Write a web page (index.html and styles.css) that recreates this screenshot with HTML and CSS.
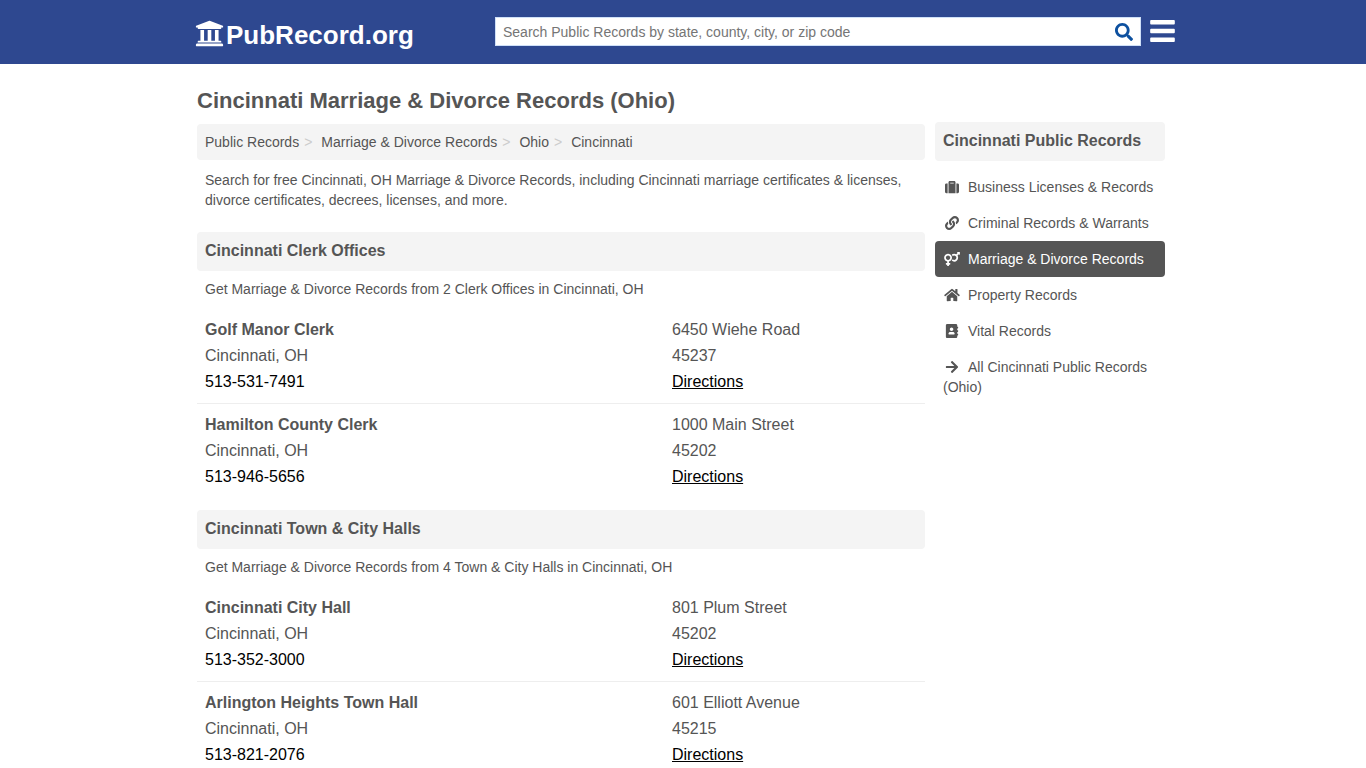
FILE: index.html
```html
<!DOCTYPE html>
<html lang="en">
<head>
  <meta charset="UTF-8">
  <title>Cincinnati Marriage &amp; Divorce Records (Ohio)</title>
  <meta name="viewport" content="width=device-width, initial-scale=1">
  <link rel="stylesheet" href="styles.css">
</head>
<body>
  <header class="header">
    <div class="header-inner">
      <a class="logo" href="#">
        <svg class="logo-icon" viewBox="0 0 512 512" aria-hidden="true"><path d="M496 128v16a8 8 0 0 1-8 8h-24v12c0 6.627-5.373 12-12 12H60c-6.627 0-12-5.373-12-12v-12H24a8 8 0 0 1-8-8v-16a8 8 0 0 1 4.941-7.392l232-88a7.996 7.996 0 0 1 6.118 0l232 88A8 8 0 0 1 496 128zm-24 304H40c-13.255 0-24 10.745-24 24v16a8 8 0 0 0 8 8h464a8 8 0 0 0 8-8v-16c0-13.255-10.745-24-24-24zM96 192v192H60c-6.627 0-12 5.373-12 12v20h416v-20c0-6.627-5.373-12-12-12h-36V192h-64v192h-64V192h-64v192h-64V192H96z"/></svg>
        <span>PubRecord.org</span>
      </a>
      <form class="search" role="search">
        <input type="text" name="q" aria-label="Search Public Records" placeholder="Search Public Records by state, county, city, or zip code">
        <button type="submit" aria-label="Search">
          <svg viewBox="0 0 512 512" aria-hidden="true"><path d="M505 442.7L405.3 343c-4.5-4.5-10.6-7-17-7H372c27.6-35.3 44-79.7 44-128C416 93.1 322.9 0 208 0S0 93.1 0 208s93.1 208 208 208c48.3 0 92.7-16.4 128-44v16.3c0 6.4 2.5 12.5 7 17l99.7 99.7c9.4 9.4 24.6 9.4 33.9 0l28.3-28.3c9.4-9.4 9.4-24.6.1-34zM208 336c-70.7 0-128-57.2-128-128 0-70.7 57.2-128 128-128 70.7 0 128 57.2 128 128 0 70.7-57.2 128-128 128z"/></svg>
        </button>
      </form>
      <button class="menu" type="button" aria-label="Menu">
        <svg viewBox="0 0 448 400" aria-hidden="true"><path d="M16 0h416a16 16 0 0 1 16 16v48a16 16 0 0 1-16 16H16A16 16 0 0 1 0 64V16A16 16 0 0 1 16 0zm0 160h416a16 16 0 0 1 16 16v48a16 16 0 0 1-16 16H16a16 16 0 0 1-16-16v-48a16 16 0 0 1 16-16zm0 160h416a16 16 0 0 1 16 16v48a16 16 0 0 1-16 16H16a16 16 0 0 1-16-16v-48a16 16 0 0 1 16-16z"/></svg>
      </button>
    </div>
  </header>

  <div class="container">
    <main class="content">
      <h1>Cincinnati Marriage &amp; Divorce Records (Ohio)</h1>
      <nav aria-label="Breadcrumb">
        <ol class="breadcrumb">
          <li><a href="#">Public Records</a></li>
          <li><a href="#">Marriage &amp; Divorce Records</a></li>
          <li><a href="#">Ohio</a></li>
          <li><a href="#">Cincinnati</a></li>
        </ol>
      </nav>
      <p class="intro">Search for free Cincinnati, OH Marriage &amp; Divorce Records, including Cincinnati marriage certificates &amp; licenses, divorce certificates, decrees, licenses, and more.</p>

      <section>
        <h2>Cincinnati Clerk Offices</h2>
        <p>Get Marriage &amp; Divorce Records from 2 Clerk Offices in Cincinnati, OH</p>
        <div class="office">
          <div>
            <h3>Golf Manor Clerk</h3>
            <div>Cincinnati, OH</div>
            <a class="phone" href="tel:513-531-7491">513-531-7491</a>
          </div>
          <div>
            <div>6450 Wiehe Road</div>
            <div>45237</div>
            <a href="#">Directions</a>
          </div>
        </div>
        <div class="office">
          <div>
            <h3>Hamilton County Clerk</h3>
            <div>Cincinnati, OH</div>
            <a class="phone" href="tel:513-946-5656">513-946-5656</a>
          </div>
          <div>
            <div>1000 Main Street</div>
            <div>45202</div>
            <a href="#">Directions</a>
          </div>
        </div>
      </section>

      <section>
        <h2>Cincinnati Town &amp; City Halls</h2>
        <p>Get Marriage &amp; Divorce Records from 4 Town &amp; City Halls in Cincinnati, OH</p>
        <div class="office">
          <div>
            <h3>Cincinnati City Hall</h3>
            <div>Cincinnati, OH</div>
            <a class="phone" href="tel:513-352-3000">513-352-3000</a>
          </div>
          <div>
            <div>801 Plum Street</div>
            <div>45202</div>
            <a href="#">Directions</a>
          </div>
        </div>
        <div class="office">
          <div>
            <h3>Arlington Heights Town Hall</h3>
            <div>Cincinnati, OH</div>
            <a class="phone" href="tel:513-821-2076">513-821-2076</a>
          </div>
          <div>
            <div>601 Elliott Avenue</div>
            <div>45215</div>
            <a href="#">Directions</a>
          </div>
        </div>
      </section>
    </main>

    <aside class="sidebar">
      <h2>Cincinnati Public Records</h2>
      <ul>
        <li><a href="#"><svg viewBox="0 0 512 512" aria-hidden="true"><path d="M128 480h256V80c0-26.5-21.5-48-48-48H176c-26.5 0-48 21.5-48 48v400zm64-384h128v32H192V96zm320 80v256c0 26.5-21.5 48-48 48h-48V128h48c26.5 0 48 21.5 48 48zM96 480H48c-26.5 0-48-21.5-48-48V176c0-26.5 21.5-48 48-48h48v352z"/></svg>Business Licenses &amp; Records</a></li>
        <li><a href="#"><svg viewBox="0 0 512 512" aria-hidden="true"><path d="M326.612 185.391c59.747 59.809 58.927 155.698.36 214.59-.11.12-.24.25-.36.37l-67.2 67.2c-59.27 59.27-155.699 59.262-214.96 0-59.27-59.26-59.27-155.7 0-214.96l37.106-37.106c9.84-9.84 26.786-3.3 27.294 10.606.648 17.722 3.826 35.527 9.69 52.721 1.986 5.822.567 12.262-3.783 16.612l-13.087 13.087c-28.026 28.026-28.905 73.66-1.155 101.96 28.024 28.579 74.086 28.749 102.325.51l67.2-67.19c28.191-28.191 28.073-73.757 0-101.83-3.701-3.694-7.429-6.564-10.341-8.569a16.037 16.037 0 0 1-6.947-12.606c-.396-10.567 3.348-21.456 11.698-29.806l21.054-21.055c5.521-5.521 14.182-6.199 20.584-1.731a152.482 152.482 0 0 1 20.522 17.197zM467.547 44.449c-59.261-59.262-155.69-59.27-214.96 0l-67.2 67.2c-.12.12-.25.25-.36.37-58.566 58.892-59.387 154.781.36 214.59a152.454 152.454 0 0 0 20.521 17.196c6.402 4.468 15.064 3.789 20.584-1.731l21.054-21.055c8.35-8.35 12.094-19.239 11.698-29.806a16.037 16.037 0 0 0-6.947-12.606c-2.912-2.005-6.64-4.875-10.341-8.569-28.073-28.073-28.191-73.639 0-101.83l67.2-67.19c28.239-28.239 74.3-28.069 102.325.51 27.75 28.3 26.872 73.934-1.155 101.96l-13.087 13.087c-4.35 4.35-5.769 10.79-3.783 16.612 5.864 17.194 9.042 34.999 9.69 52.721.509 13.906 17.454 20.446 27.294 10.606l37.106-37.106c59.271-59.259 59.271-155.699.001-214.959z"/></svg>Criminal Records &amp; Warrants</a></li>
        <li><a class="active" href="#"><svg viewBox="0 0 576 512" aria-hidden="true"><path d="M564 0h-79c-10.7 0-16 12.9-8.5 20.5l16.9 16.9-48.7 48.7C422.5 72.1 396.2 64 368 64c-33.7 0-64.6 11.6-89.2 30.9 14 16.7 25 36 32.1 57.1 14.5-14.8 34.7-24 57.1-24 44.1 0 80 35.9 80 80s-35.9 80-80 80c-22.3 0-42.6-9.2-57.1-24-7.1 21.1-18 40.4-32.1 57.1 24.5 19.4 55.5 30.9 89.2 30.9 79.5 0 144-64.5 144-144 0-28.2-8.1-54.5-22.1-76.7l48.7-48.7 16.9 16.9c2.4 2.4 5.4 3.5 8.4 3.5 6.2 0 12.1-4.8 12.1-12V12c0-6.6-5.4-12-12-12zM144 64C64.5 64 0 128.5 0 208c0 68.5 47.9 125.9 112 140.4V400H76c-6.6 0-12 5.4-12 12v40c0 6.6 5.4 12 12 12h36v36c0 6.6 5.4 12 12 12h40c6.6 0 12-5.4 12-12v-36h36c6.6 0 12-5.4 12-12v-40c0-6.6-5.4-12-12-12h-36v-51.6c64.1-14.6 112-71.9 112-140.4 0-79.5-64.5-144-144-144zm0 224c-44.1 0-80-35.9-80-80s35.9-80 80-80 80 35.9 80 80-35.9 80-80 80z"/></svg>Marriage &amp; Divorce Records</a></li>
        <li><a href="#"><svg viewBox="0 0 576 512" aria-hidden="true"><path d="M280.37 148.26L96 300.11V464a16 16 0 0 0 16 16l112.06-.29a16 16 0 0 0 15.92-16V368a16 16 0 0 1 16-16h64a16 16 0 0 1 16 16v95.64a16 16 0 0 0 16 16.05L464 480a16 16 0 0 0 16-16V300L295.67 148.26a12.19 12.19 0 0 0-15.3 0zM571.6 251.47L488 182.56V44.05a12 12 0 0 0-12-12h-56a12 12 0 0 0-12 12v72.61L318.47 43a48 48 0 0 0-61 0L4.34 251.47a12 12 0 0 0-1.6 16.9l25.5 31A12 12 0 0 0 45.15 301l235.22-193.74a12.19 12.19 0 0 1 15.3 0L530.9 301a12 12 0 0 0 16.9-1.6l25.5-31a12 12 0 0 0-1.7-16.93z"/></svg>Property Records</a></li>
        <li><a href="#"><svg viewBox="0 0 448 512" aria-hidden="true"><path d="M436 160c6.6 0 12-5.4 12-12v-40c0-6.6-5.4-12-12-12h-20V48c0-26.5-21.5-48-48-48H48C21.5 0 0 21.5 0 48v416c0 26.5 21.5 48 48 48h320c26.5 0 48-21.5 48-48v-48h20c6.6 0 12-5.4 12-12v-40c0-6.6-5.4-12-12-12h-20v-64h20c6.6 0 12-5.4 12-12v-40c0-6.6-5.4-12-12-12h-20v-64h20zm-228-32c35.3 0 64 28.7 64 64s-28.7 64-64 64-64-28.7-64-64 28.7-64 64-64zm112 236.8c0 10.6-10 19.2-22.4 19.2H118.4C106 384 96 375.4 96 364.8v-19.2c0-31.8 30.1-57.6 67.2-57.6h5c12.3 5.1 25.7 8 39.8 8s27.6-2.9 39.8-8h5c37.1 0 67.2 25.8 67.2 57.6v19.2z"/></svg>Vital Records</a></li>
        <li><a href="#"><svg viewBox="0 0 448 512" aria-hidden="true"><path d="M190.5 66.9l22.2-22.2c9.4-9.4 24.6-9.4 33.9 0L441 239c9.4 9.4 9.4 24.6 0 33.9L246.6 467.3c-9.4 9.4-24.6 9.4-33.9 0l-22.2-22.2c-9.5-9.5-9.3-25 .4-34.3L311.4 296H24c-13.3 0-24-10.7-24-24v-32c0-13.3 10.7-24 24-24h287.4L190.9 101.2c-9.8-9.3-10-24.8-.4-34.3z"/></svg>All Cincinnati Public Records (Ohio)</a></li>
      </ul>
    </aside>
  </div>
</body>
</html>
```

FILE: styles.css
```css
* {
  box-sizing: border-box;
}
body {
  margin: 0;
  background: #fff;
  color: #555;
  font-family: Arial, "Liberation Sans", sans-serif;
  font-size: 14px;
  line-height: 20px;
}
h1, h2, h3, p, ul, ol {
  margin: 0;
  padding: 0;
}
ul, ol {
  list-style: none;
}
a {
  color: #555;
  text-decoration: none;
}
svg {
  fill: currentColor;
}
button {
  border: none;
  background: none;
  padding: 0;
  cursor: pointer;
}

/* header */
.header {
  background: #2e4890;
}
.header-inner {
  display: flex;
  align-items: center;
  max-width: 984px;
  height: 64px;
  margin: 0 auto;
  padding-left: 4px;
}
.logo {
  display: flex;
  align-items: center;
  flex: 0 0 300px;
  gap: 2px;
  padding-top: 6px;
  color: #fff;
  font-size: 26px;
  font-weight: bold;
  line-height: 32px;
}
.logo-icon {
  width: 29px;
  height: 29px;
  margin-bottom: 4px;
}
.search {
  display: flex;
  flex: 1;
  height: 29px;
  margin-bottom: 2px;
  background: #fff;
  border: 1px solid #cfe0f8;
}
.search input {
  flex: 1;
  min-width: 0;
  padding: 2px 7px 0;
  border: none;
  outline: none;
  background: none;
  color: #555;
  font-family: inherit;
  font-size: 14px;
}
.search input::placeholder {
  color: #757575;
}
.search button {
  width: 32px;
  padding-top: 2px;
  color: #0d509f;
}
.search button svg {
  display: block;
  width: 18px;
  height: 18px;
  margin: 0 auto;
}
.menu {
  margin-left: 9px;
  color: #fff;
}
.menu svg {
  display: block;
  width: 25px;
  height: 22px;
  margin-bottom: 3px;
}

/* page columns */
.container {
  display: flex;
  gap: 10px;
  max-width: 972px;
  margin: 0 auto;
  padding-right: 4px;
}
.content {
  flex: 1;
  min-width: 0;
}
.sidebar {
  flex: 0 0 230px;
  padding-top: 58px;
}
h1 {
  padding: 23px 0 9px;
  font-size: 22px;
  line-height: 28px;
}
h2 {
  padding: 9px 8px 10px;
  border-radius: 4px;
  background: #f4f4f4;
  font-size: 16px;
  line-height: 20px;
}
.breadcrumb {
  display: flex;
  flex-wrap: wrap;
  padding: 8px;
  border-radius: 4px;
  background: #f4f4f4;
}
.breadcrumb li + li::before {
  content: ">";
  padding: 0 9px 0 5px;
  color: #ccc;
}
.content p {
  padding: 8px 8px 10px;
}
.content .intro {
  padding: 10px 8px 22px;
}

/* office listings */
section {
  margin-bottom: 12px;
}
.office {
  display: grid;
  grid-template-columns: 467px 1fr;
  padding: 8px;
  border-bottom: 1px solid #eee;
  font-size: 16px;
  line-height: 26px;
}
.office:last-child {
  border-bottom: none;
}
.office h3 {
  font-size: 16px;
}
.office a {
  color: #000;
  text-decoration: underline;
}
.office .phone {
  text-decoration: none;
}

/* sidebar links */
.sidebar ul {
  padding-top: 8px;
}
.sidebar li a {
  display: block;
  padding: 8px;
  border-radius: 4px;
}
.sidebar li svg {
  width: 18px;
  height: 14px;
  margin-right: 7px;
  vertical-align: -2px;
}
.sidebar li .active {
  background: #555;
  color: #fff;
}

@media (max-width: 800px) {
  .container {
    display: block;
    padding: 0 8px;
  }
  .logo {
    flex-basis: 230px;
  }
  .sidebar {
    padding-top: 16px;
  }
  .office {
    grid-template-columns: 1fr 1fr;
  }
}
```
